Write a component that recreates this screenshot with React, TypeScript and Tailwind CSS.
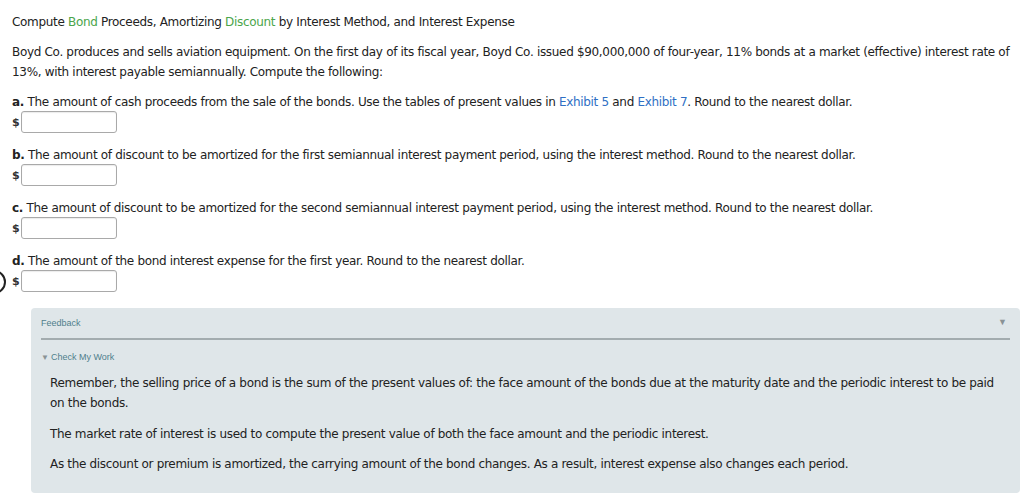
import React from "react";

const Field = () => (
  <div className="flex items-center h-[22px]">
    <span className="w-[9px] text-[11px] font-bold text-[#333] leading-none">$</span>
    <div className="w-[96px] h-[22px] bg-white border border-[#a9a9a9] rounded-[3px] shadow-[inset_0_1px_1px_rgba(0,0,0,0.08)]" />
  </div>
);

const Question = ({ letter, children }: { letter: string; children: React.ReactNode }) => (
  <div>
    <div className="leading-[18px]">
      <span className="font-bold">{letter}.</span> {children}
    </div>
    <Field />
  </div>
);

export default function App() {
  return (
    <div
      className="relative w-[1024px] h-[498px] bg-white text-[12px] tracking-[-0.32px] text-[#222] overflow-hidden"
      style={{ fontFamily: '"DejaVu Sans", Verdana, sans-serif' }}
    >
      <div className="pl-[12px] pr-[5px] pt-[12px]">
        <div className="leading-[20px]">
          Compute <span className="text-[#4ba54b]">Bond</span> Proceeds, Amortizing{" "}
          <span className="text-[#4ba54b]">Discount</span> by Interest Method, and Interest Expense
        </div>
        <p className="mt-[10px] leading-[20px]">
          Boyd Co. produces and sells aviation equipment. On the first day of its fiscal year, Boyd Co. issued
          $90,000,000 of four-year, 11% bonds at a market (effective) interest rate of 13%, with interest payable
          semiannually. Compute the following:
        </p>
        <div className="mt-[11px] flex flex-col gap-[13px]">
          <Question letter="a">
            The amount of cash proceeds from the sale of the bonds. Use the tables of present values in{" "}
            <span className="text-[#2f6fc4]">Exhibit 5</span> and <span className="text-[#2f6fc4]">Exhibit 7</span>.
            Round to the nearest dollar.
          </Question>
          <Question letter="b">
            The amount of discount to be amortized for the first semiannual interest payment period, using the
            interest method. Round to the nearest dollar.
          </Question>
          <Question letter="c">
            The amount of discount to be amortized for the second semiannual interest payment period, using the
            interest method. Round to the nearest dollar.
          </Question>
          <Question letter="d">The amount of the bond interest expense for the first year. Round to the nearest dollar.</Question>
        </div>
      </div>

      <div className="absolute left-[-18px] top-[270px] w-[24px] h-[24px] rounded-full border-[2px] border-[#222]" />

      <div className="mt-[16px] ml-[31px] w-[989px] bg-[#dfe6e9] rounded-[4px] pt-[10px] pb-[19px]">
        <div className="px-[10px]">
          <div
            className="relative text-[9px] leading-[11px] tracking-normal text-[#4f7f8c]"
            style={{ fontFamily: '"Liberation Sans", Arial, sans-serif' }}
          >
            Feedback
            <span className="absolute right-[3px] top-[-1px] text-[9px] text-[#8a9396]">▼</span>
          </div>
          <div className="mt-[9px] h-[2px] bg-[#a3acaf]" />
          <div
            className="mt-[12px] text-[9px] leading-[11px] tracking-normal text-[#4f7f8c] flex items-center"
            style={{ fontFamily: '"Liberation Sans", Arial, sans-serif' }}
          >
            <span className="text-[8px] text-[#8a9396] mr-[2px]">▼</span>Check My Work
          </div>
        </div>
        <div className="pl-[19px] pr-[19px] mt-[10px] leading-[20px] text-[#222]">
          <p>
            Remember, the selling price of a bond is the sum of the present values of: the face amount of the bonds
            due at the maturity date and the periodic interest to be paid on the bonds.
          </p>
          <p className="mt-[11px]">
            The market rate of interest is used to compute the present value of both the face amount and the periodic
            interest.
          </p>
          <p className="mt-[10px]">
            As the discount or premium is amortized, the carrying amount of the bond changes. As a result, interest
            expense also changes each period.
          </p>
        </div>
      </div>
    </div>
  );
}
